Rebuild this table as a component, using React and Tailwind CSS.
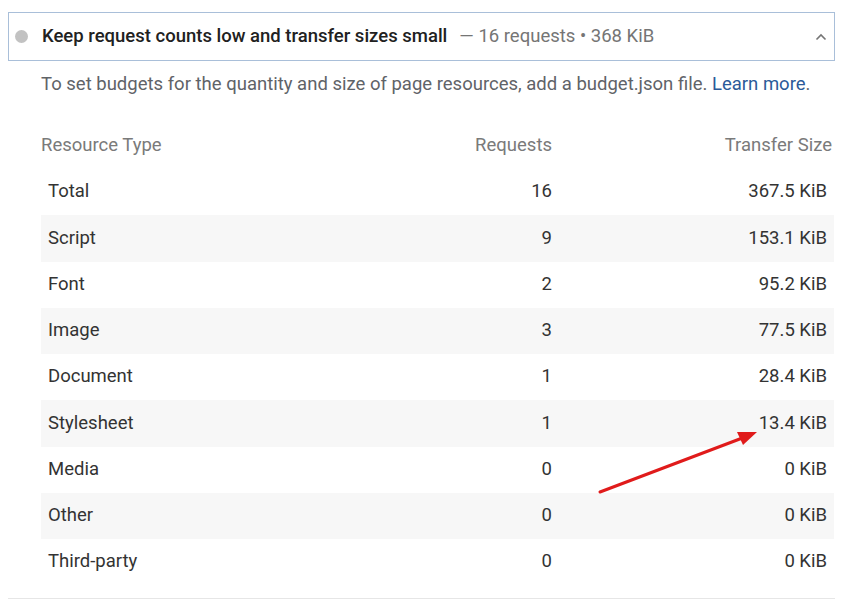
import React from 'react';

const rows = [
  { type: 'Total', requests: 16, size: '367.5 KiB' },
  { type: 'Script', requests: 9, size: '153.1 KiB' },
  { type: 'Font', requests: 2, size: '95.2 KiB' },
  { type: 'Image', requests: 3, size: '77.5 KiB' },
  { type: 'Document', requests: 1, size: '28.4 KiB' },
  { type: 'Stylesheet', requests: 1, size: '13.4 KiB' },
  { type: 'Media', requests: 0, size: '0 KiB' },
  { type: 'Other', requests: 0, size: '0 KiB' },
  { type: 'Third-party', requests: 0, size: '0 KiB' },
];

export default function App() {
  return (
    <div
      className="relative w-[854px] h-[609px] bg-white overflow-hidden pt-[12px] px-[8px]"
      style={{ fontFamily: 'Roboto, "Liberation Sans", sans-serif' }}
    >
      {/* Audit header */}
      <div className="flex items-center h-[49px] w-[827px] border border-[#a9bfd9] pl-[6px] pr-[6px]">
        <span className="w-[13px] h-[13px] rounded-full bg-[#c2c2c2]" />
        <span className="ml-[14px] text-[18.5px] font-medium text-[#212121]">
          Keep request counts low and transfer sizes small
        </span>
        <span className="ml-[12px] text-[18.5px] text-[#757575]">— 16 requests • 368 KiB</span>
        <svg className="ml-auto mr-[1px]" width="12" height="8" viewBox="0 0 12 8">
          <polyline points="1.5,6.5 6,2 10.5,6.5" fill="none" stroke="#757575" strokeWidth="1.6" />
        </svg>
      </div>

      <div className="pl-[33px]">
        <p className="mt-[11px] text-[18.5px] text-[#5f6368] leading-[24px]">
          To set budgets for the quantity and size of page resources, add a budget.json file.{' '}
          <span className="text-[#2b5a99]">Learn more</span>.
        </p>

        {/* Table */}
        <div className="mt-[27px] w-[793px]">
          <div className="flex items-center h-[46px] text-[18.5px] text-[#7a7a7a] pr-[2px]">
            <div className="w-[380px]">Resource Type</div>
            <div className="w-[131px] text-right">Requests</div>
            <div className="flex-1 text-right">Transfer Size</div>
          </div>
          {rows.map((r, i) => (
            <div
              key={r.type}
              className={`flex items-center h-[46.25px] px-[7px] text-[18.5px] text-[#333333] ${
                i % 2 === 1 ? 'bg-[#f7f7f7]' : ''
              }`}
            >
              <div className="w-[373px]">{r.type}</div>
              <div className="w-[131px] text-right">{r.requests}</div>
              <div className="flex-1 text-right">{r.size}</div>
            </div>
          ))}
        </div>
      </div>

      <div className="mt-[13px] w-[827px] h-px bg-[#e6e6e6]" />

      {/* Annotation arrow */}
      <svg className="absolute left-0 top-0 pointer-events-none" width="854" height="609">
        <line x1="600" y1="492" x2="745" y2="437" stroke="#e01b1b" strokeWidth="3" strokeLinecap="round" />
        <polygon points="757,432 737,432 743,445" fill="#e01b1b" />
      </svg>
    </div>
  );
}
